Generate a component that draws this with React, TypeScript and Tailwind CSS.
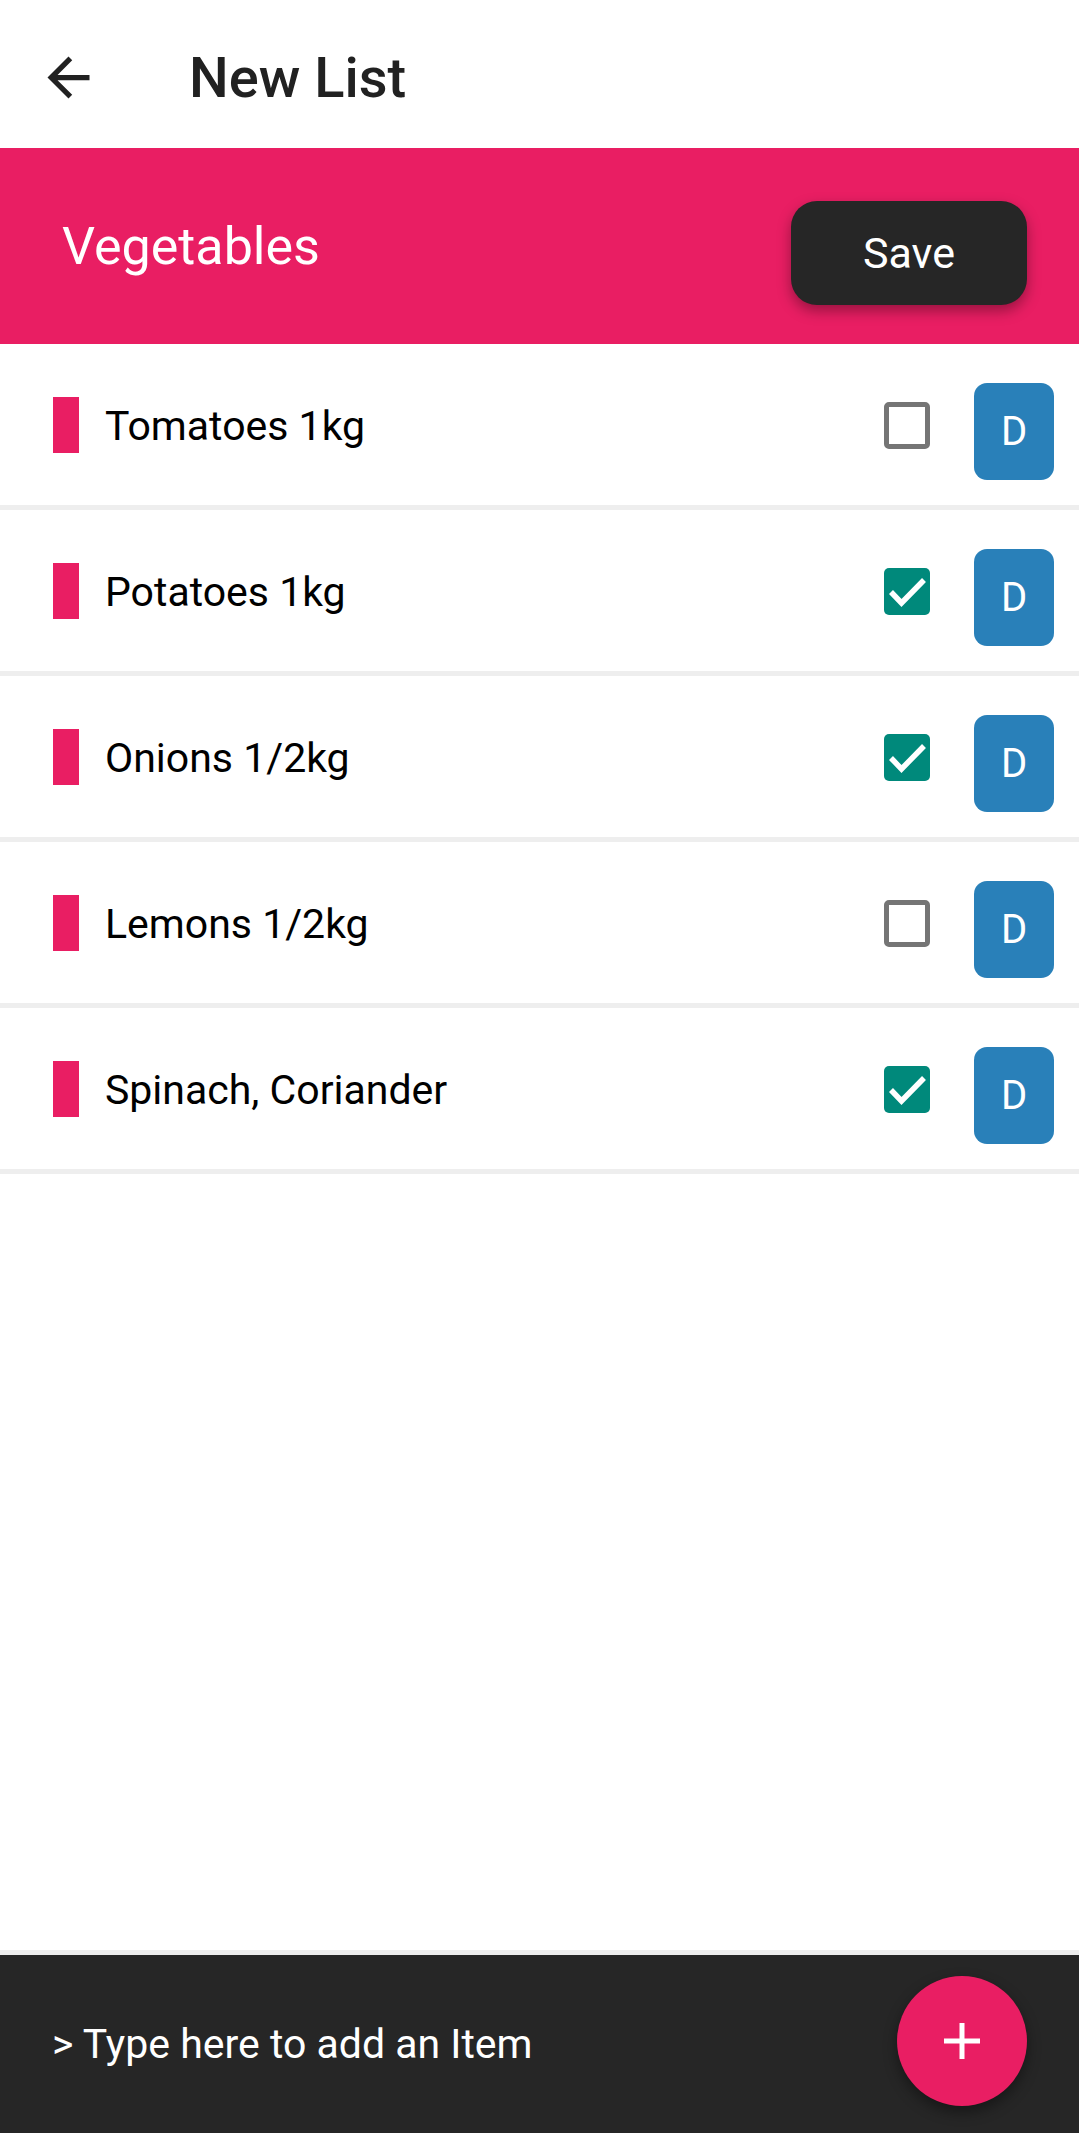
import React from "react";

const items = [
  { name: "Tomatoes 1kg", done: false },
  { name: "Potatoes 1kg", done: true },
  { name: "Onions 1/2kg", done: true },
  { name: "Lemons 1/2kg", done: false },
  { name: "Spinach, Coriander", done: true },
];

function Check({ on }: { on: boolean }) {
  if (!on) {
    return <span className="block w-[46px] h-[47px] rounded-[5px] border-[5px] border-[#757575] bg-white" />;
  }
  return (
    <span className="block w-[46px] h-[47px] rounded-[5px] bg-[#00897b]">
      <svg width="46" height="47" viewBox="0 0 46 47" fill="none">
        <path d="M7 24l10.5 11L40 12" stroke="#fff" strokeWidth="5.5" />
      </svg>
    </span>
  );
}

export default function App() {
  return (
    <div className="h-[2133px] w-full flex flex-col bg-white font-['Roboto',sans-serif]">
      <header className="h-[148px] flex items-center shrink-0">
        <svg width="63" height="63" viewBox="0 0 24 24" className="ml-[37px] mt-[6px]" fill="#212121">
          <path d="M20 11H7.83l5.59-5.59L12 4l-8 8 8 8 1.41-1.41L7.83 13H20v-2z" />
        </svg>
        <h1 className="ml-[89px] text-[56px] font-medium text-[#212121] leading-none mt-[8px]">New List</h1>
      </header>

      <div className="h-[196px] bg-[#e91e63] flex items-center justify-between pl-[62px] pr-[52px] shrink-0">
        <span className="text-white text-[52px] leading-none mt-[2px]">Vegetables</span>
        <button className="w-[236px] h-[104px] rounded-[26px] bg-[#262626] text-white text-[43px] mt-[14px] shadow-[0_6px_14px_rgba(0,0,0,0.35)]">
          Save
        </button>
      </div>

      <main className="flex-1">
        {items.map((it) => (
          <div key={it.name} className="h-[166px] border-b-[5px] border-[#eeeeee] flex items-center pl-[53px] pr-[25px]">
            <span className="w-[26px] h-[56px] bg-[#e91e63] shrink-0" />
            <span className="ml-[26px] flex-1 text-[41px] text-black leading-none mt-[4px]">{it.name}</span>
            <span className="mt-[2px]">
              <Check on={it.done} />
            </span>
            <span className="ml-[44px] mt-[14px] w-[80px] h-[97px] rounded-[13px] bg-[#2980b9] text-white text-[40px] flex items-center justify-center">
              D
            </span>
          </div>
        ))}
      </main>

      <footer className="h-[183px] shrink-0 border-t-[5px] border-[#eeeeee] bg-[#262626] flex items-center justify-between pl-[52px] pr-[52px]">
        <span className="text-white text-[41px] leading-none">&gt; Type here to add an Item</span>
        <button className="w-[130px] h-[130px] rounded-full bg-[#e91e63] flex items-center justify-center -mt-[6px] shadow-[0_6px_14px_rgba(0,0,0,0.4)]">
          <svg width="38" height="38" viewBox="0 0 38 38">
            <path d="M19 1v36M1 19h36" stroke="#fff" strokeWidth="5" />
          </svg>
        </button>
      </footer>
    </div>
  );
}
